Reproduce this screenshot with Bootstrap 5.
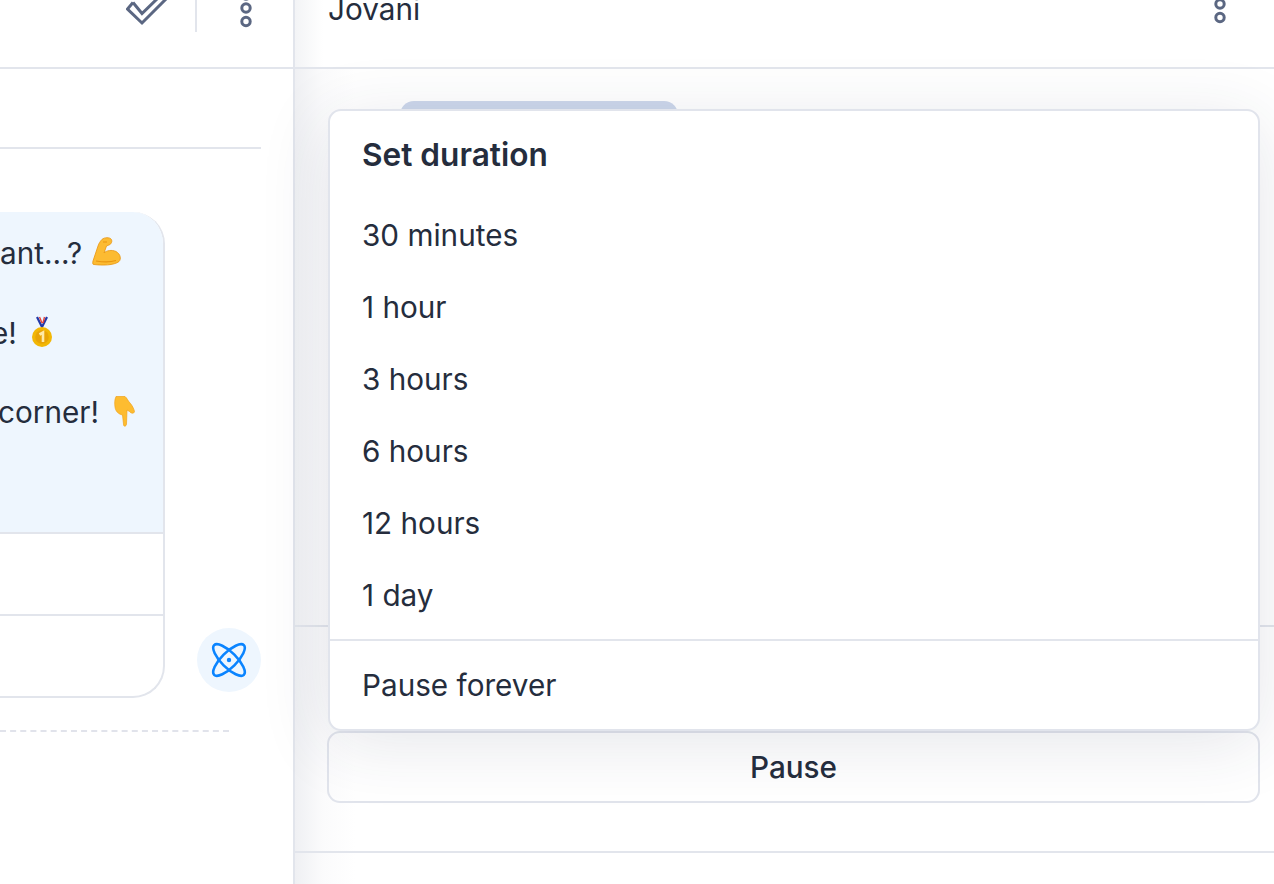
<!DOCTYPE html>
<html lang="en">
<head>
  <meta charset="UTF-8">
  <title>Set duration</title>
  <link href="https://cdn.jsdelivr.net/npm/bootstrap@5.3.0/dist/css/bootstrap.min.css" rel="stylesheet">
  <style>
    html, body { height: 884px; }
    body {
      font-family: Inter, "Liberation Sans", sans-serif;
      font-size: 29.7px;
      line-height: 40px;
      color: #252d3d;
      background: #fff;
      overflow: hidden;
    }
    .chat-pane { width: 295px; flex: none; border-right: 2px solid #e2e5ec; }
    .pane-head { height: 69px; border-bottom: 2px solid #e2e5ec; overflow: hidden; flex: none; }
    .head-icons { padding-right: 40px; height: 32px; }
    .check-icon { margin-right: 19px; }
    .vline { width: 2px; height: 32px; background: #e2e5ec; margin-right: 42px; }
    .hr-line { height: 2px; background: #e2e5ec; width: 261px; margin-top: 78px; }
    .msg-row { width: 261px; margin-top: 63px; gap: 32px; }
    .bubble { width: 165px; height: 486px; flex: none; border: 2px solid #e2e5ec; border-left: 0; border-top: 0; border-radius: 0 32px 32px 0; overflow: hidden; }
    .bubble-body { height: 320px; background: #eef6fe; border-top-right-radius: 32px; padding-top: 21px; margin-right: -2px; }
    .bubble-body p { margin: 0 0 39.5px; height: 40px; white-space: nowrap; }
    .bubble-body .clip-e { margin-left: -9px; }
    .bubble-body .clip-c { margin-left: -2px; }
    .bubble-btn { height: 82px; border-top: 2px solid #e2e5ec; }
    .bot-dot { width: 64px; height: 64px; flex: none; background: #eef6fe; margin-bottom: 6px; }
    .dash-line { width: 229px; margin-top: 32px; border-top: 2px dashed #e1e3eb; }
    .side-pane { background: linear-gradient(90deg, #eff0f3 0, #fbfbfc 28px, #fff 60px); }
    .side-pane .pane-head { background: linear-gradient(90deg, #f3f4f6 0, #fff 28px); }
    .jovani { padding: 0 33px; margin-top: -11px; height: 40px; }
    .kebab-right { margin-right: 47px; }
    .pill-behind { width: 278px; height: 20px; margin: 32px 0 0 105px; background: #cdd7eb; border-radius: 14px 14px 0 0; flex: none; }
    .side-spacer { height: 504px; flex: none; }
    .side-line { height: 2px; background: #e2e5ec; flex: none; }
    .pause-btn {
      display: block; width: 933px; height: 72px; margin: 104px 0 0 32px;
      background: transparent; border: 2px solid #e1e4ec; border-radius: 13px;
      font-weight: 500; font-size: 29.7px; color: #252d3d; padding: 0;
    }
    .line-low { margin-top: 48px; }
    .duration-menu {
      position: absolute; left: 328px; top: 109px; width: 932px; height: 622px;
      background: #fff; border: 2px solid #e1e4ec; border-radius: 13px;
      box-shadow: 0 12px 70px rgba(40, 50, 80, .12); z-index: 5;
    }
    .menu-title { font-weight: 600; font-size: 31.6px; padding: 24px 32px 0; height: 88px; }
    .menu-opt { height: 72px; padding: 0 32px; display: flex; align-items: center; }
    .menu-sep { height: 2px; background: #e2e5ec; margin-top: 8px; }
    .menu-last { height: 88px; padding: 0 32px; display: flex; align-items: center; }
    .emoji { display: inline-block; vertical-align: top; }
    .emoji-arm { margin-top: 4px; margin-left: 1px; }
    .emoji-medal { margin-top: 3px; margin-left: 6px; }
    .emoji-hand { margin-top: 4px; margin-left: 6px; }
  </style>
</head>
<body class="d-flex">
  <div class="chat-pane d-flex flex-column">
    <div class="pane-head">
      <div class="head-icons d-flex justify-content-end align-items-start">
        <svg class="check-icon" width="50" height="28" viewBox="0 0 50 28" fill="none" stroke="#5b6782" stroke-width="3">
          <path d="M7 2.5 L1.5 9 L16 23 L42 -3 M7 2.5 L16 13.5 L33 -3"/>
        </svg>
        <div class="vline"></div>
        <svg width="14" height="30" viewBox="0 0 14 30" fill="none" stroke="#5b6782" stroke-width="3">
          <circle cx="7" cy="8" r="4.2"/><circle cx="7" cy="21.5" r="4.2"/><circle cx="7" cy="-5" r="4.2"/>
        </svg>
      </div>
    </div>
    <div class="hr-line"></div>
    <div class="msg-row d-flex align-items-end">
      <div class="bubble">
        <div class="bubble-body">
          <p>ant...? <svg class="emoji emoji-arm" width="29" height="29" viewBox="0 0 29 29">
            <path d="M2 27.5 C0.5 27.5 0.5 26 1 24 L6 9 C7 6 8 5 9 3.5 C11 0.5 16 0 18.5 1.5 C20.5 3 20 6 18 7.5 L14.5 9 L12 16 C14 13.5 20 12.5 24 14.5 C28.5 17 29.5 22 27 24.5 C22 28.5 10 28.5 2 27.5Z" fill="#fcbb32" stroke="#e8950f" stroke-width=".8"/>
            <path d="M11 5 L15 5 M4 24 C10 25 18 25.5 24 23.5" fill="none" stroke="#e8950f" stroke-width="1.2"/>
          </svg></p>
          <p class="clip-e">e! <svg class="emoji emoji-medal" width="22" height="32" viewBox="0 0 22 32">
            <path d="M6 1 L11 11 L16 1" fill="none" stroke="#2339a8" stroke-width="2.2"/>
            <path d="M8.5 1 L11 7 M13.5 1 L12 7" stroke="#e6453a" stroke-width="1.4"/>
            <circle cx="11" cy="21" r="10" fill="#f2b705"/><circle cx="11" cy="21" r="6.8" fill="#e8a406"/>
            <path d="M8.5 18.5 L12 16.5 V26" fill="none" stroke="#ffeaa8" stroke-width="2.6"/>
          </svg></p>
          <p class="clip-c">corner! <svg class="emoji emoji-hand" width="23" height="31" viewBox="0 0 23 31">
            <path d="M3 0.5 H12 C14 2 15 5 17 7 C19 9 21 13 21.5 15.5 C21 18 18 17.5 16.5 15.5 L14 14 L13.5 28 C13 31 10.5 31 10.5 28 L9.5 19 C5 18 2.5 15 2 11 C1.5 7 1.5 4 3 0.5Z" fill="#fdbc30" stroke="#f0a21a" stroke-width=".7"/>
          </svg></p>
        </div>
        <div class="bubble-btn"></div>
        <div class="bubble-btn"></div>
      </div>
      <div class="bot-dot rounded-circle d-flex align-items-center justify-content-center">
        <svg width="36" height="36" viewBox="-18 -18 36 36" fill="none" stroke="#0a84ff" stroke-width="2.6">
          <ellipse rx="21" ry="7.6" transform="rotate(45)"/><ellipse rx="21" ry="7.6" transform="rotate(-45)"/>
          <circle r="2.2" fill="#0a84ff" stroke="none"/>
        </svg>
      </div>
    </div>
    <div class="dash-line"></div>
  </div>

  <div class="side-pane flex-grow-1 d-flex flex-column">
    <div class="pane-head d-flex justify-content-between align-items-start">
      <div class="jovani">Jovani</div>
      <svg class="kebab-right" width="14" height="30" viewBox="0 0 14 30" fill="none" stroke="#5b6782" stroke-width="3">
        <circle cx="7" cy="4" r="4.2"/><circle cx="7" cy="17.5" r="4.2"/>
      </svg>
    </div>
    <div class="pill-behind"></div>
    <div class="side-spacer"></div>
    <div class="side-line"></div>
    <button class="pause-btn" type="button">Pause</button>
    <div class="side-line line-low"></div>
  </div>

  <div class="duration-menu">
    <div class="menu-title">Set duration</div>
    <div class="menu-opt">30 minutes</div>
    <div class="menu-opt">1 hour</div>
    <div class="menu-opt">3 hours</div>
    <div class="menu-opt">6 hours</div>
    <div class="menu-opt">12 hours</div>
    <div class="menu-opt">1 day</div>
    <div class="menu-sep"></div>
    <div class="menu-last">Pause forever</div>
  </div>
</body>
</html>
